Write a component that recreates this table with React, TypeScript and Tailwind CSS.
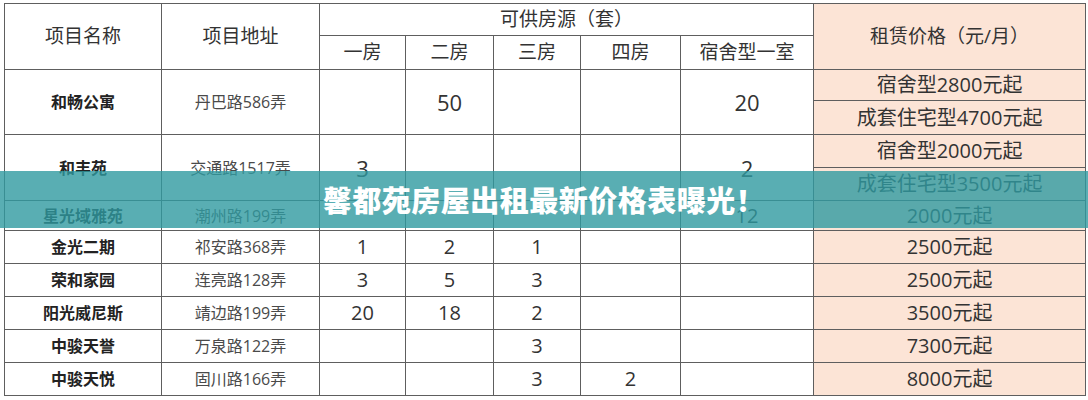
const font = "font-['Open_Sans','Noto_Sans_CJK_SC',sans-serif]";

const cell = "border border-[#5e5e5e] text-center align-middle p-0 leading-none";
const price = `${cell} bg-[#fce4d6] text-[20px] text-[#333]`;
const name = `${cell} text-[16px] font-bold text-[#222]`;
const addr = `${cell} text-[16px] text-[#4a4a4a]`;
const num = `${cell} text-[20px] text-[#333]`;
const bigNum = `${cell} text-[22px] text-[#333]`;
const head = `${cell} text-[19px] text-[#333]`;

type Row = { name: string; addr: string; counts: string[]; price: string };

const rows: Row[] = [
  { name: "金光二期", addr: "祁安路368弄", counts: ["1", "2", "1", "", ""], price: "2500元起" },
  { name: "荣和家园", addr: "连亮路128弄", counts: ["3", "5", "3", "", ""], price: "2500元起" },
  { name: "阳光威尼斯", addr: "靖边路199弄", counts: ["20", "18", "2", "", ""], price: "3500元起" },
  { name: "中骏天誉", addr: "万泉路122弄", counts: ["", "", "3", "", ""], price: "7300元起" },
  { name: "中骏天悦", addr: "固川路166弄", counts: ["", "", "3", "2", ""], price: "8000元起" },
];

function Counts({ values, span, big }: { values: string[]; span?: number; big?: boolean }) {
  return (
    <>
      {values.map((v, i) => (
        <td key={i} rowSpan={span} className={big ? bigNum : num}>
          {v}
        </td>
      ))}
    </>
  );
}

export default function App() {
  return (
    <div className={`relative w-[1088px] h-[400px] bg-white overflow-hidden ${font}`}>
      <div className="pl-[4px] pt-[3px]">
        <table className="table-fixed border-collapse w-[1081px]">
          <colgroup>
            <col className="w-[157px]" />
            <col className="w-[158px]" />
            <col className="w-[86px]" />
            <col className="w-[88px]" />
            <col className="w-[87px]" />
            <col className="w-[100px]" />
            <col className="w-[133px]" />
            <col className="w-[272px]" />
          </colgroup>
          <tbody>
            <tr className="h-[32px]">
              <td rowSpan={2} className={head}>项目名称</td>
              <td rowSpan={2} className={head}>项目地址</td>
              <td colSpan={5} className={head}>可供房源（套）</td>
              <td rowSpan={2} className={`${head} bg-[#fce4d6]`}>租赁价格（元/月）</td>
            </tr>
            <tr className="h-[34px]">
              <td className={head}>一房</td>
              <td className={head}>二房</td>
              <td className={head}>三房</td>
              <td className={head}>四房</td>
              <td className={head}>宿舍型一室</td>
            </tr>

            <tr className="h-[31px]">
              <td rowSpan={2} className={name}>和畅公寓</td>
              <td rowSpan={2} className={addr}>丹巴路586弄</td>
              <Counts values={["", "50", "", "", "20"]} span={2} big />
              <td className={price}>宿舍型2800元起</td>
            </tr>
            <tr className="h-[34px]">
              <td className={price}>成套住宅型4700元起</td>
            </tr>

            <tr className="h-[33px]">
              <td rowSpan={2} className={name}>和丰苑</td>
              <td rowSpan={2} className={addr}>交通路1517弄</td>
              <Counts values={["3", "", "", "", "2"]} span={2} big />
              <td className={price}>宿舍型2000元起</td>
            </tr>
            <tr className="h-[33px]">
              <td className={price}>成套住宅型3500元起</td>
            </tr>

            <tr className="h-[30px]">
              <td className={name}>星光域雅苑</td>
              <td className={addr}>潮州路199弄</td>
              <Counts values={["", "", "", "", "12"]} />
              <td className={price}>2000元起</td>
            </tr>

            {rows.map((r) => (
              <tr key={r.name} className="h-[33px]">
                <td className={name}>{r.name}</td>
                <td className={addr}>{r.addr}</td>
                <Counts values={r.counts} />
                <td className={price}>{r.price}</td>
              </tr>
            ))}
          </tbody>
        </table>
      </div>

      {/* title banner laid over the table */}
      <div className="absolute left-0 right-0 top-[171px] h-[57px] bg-[#2f9aa0]/80 flex items-center justify-center">
        <span className="text-white text-[29px] font-black tracking-[0.5px] font-['Noto_Sans_CJK_SC',sans-serif]">
          馨都苑房屋出租最新价格表曝光！
        </span>
      </div>
    </div>
  );
}
